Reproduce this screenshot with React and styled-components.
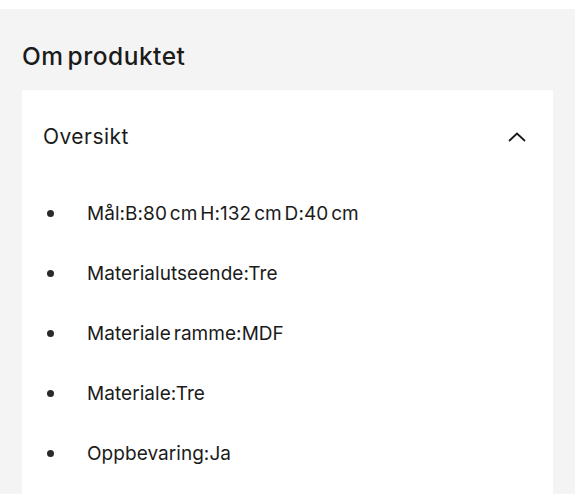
import React from "react";
import styled, { createGlobalStyle } from "styled-components";

const Global = createGlobalStyle`
  html, body { margin: 0; padding: 0; background: #ffffff; }
  body { font-family: Inter, "Noto Sans", sans-serif; color: #1b1b1b; }
`;

const Section = styled.section`
  margin-top: 9px;
  background: #f4f4f4;
  padding: 0 22px;
  height: 485px;
  box-sizing: border-box;
  overflow: hidden;
`;

const Title = styled.h2`
  margin: 0;
  box-sizing: border-box;
  height: 81px;
  padding-top: 13px;
  display: flex;
  align-items: center;
  font-size: 24.5px;
  font-weight: 500;
  letter-spacing: 0.5px;
  word-spacing: -3px;
  color: #1b1b1b;
`;

const Card = styled.div`
  background: #ffffff;
  width: 531px;
  min-height: 420px;
`;

const Header = styled.button`
  all: unset;
  box-sizing: border-box;
  width: 100%;
  height: 93px;
  display: flex;
  align-items: center;
  justify-content: space-between;
  padding: 0 27px 0 21px;
  cursor: pointer;
`;

const HeaderText = styled.span`
  font-family: Inter, "Noto Sans", sans-serif;
  font-size: 21px;
  font-weight: 400;
  letter-spacing: 0.45px;
  color: #1b1b1b;
`;

const List = styled.ul`
  list-style: none;
  margin: 0;
  padding: 0;
`;

const Item = styled.li`
  height: 60px;
  display: flex;
  align-items: center;
  font-size: 19px;
  letter-spacing: 0.05px;
  word-spacing: -2.5px;
  color: #1b1b1b;
  &::before {
    content: "";
    width: 7px;
    height: 7px;
    border-radius: 50%;
    background: #2a2a2a;
    margin-left: 25px;
    margin-right: 33px;
    flex: none;
  }
`;

const items = [
  "Mål:B:80 cm H:132 cm D:40 cm",
  "Materialutseende:Tre",
  "Materiale ramme:MDF",
  "Materiale:Tre",
  "Oppbevaring:Ja",
];

export default function App() {
  return (
    <>
      <Global />
      <Section>
        <Title>Om produktet</Title>
        <Card>
          <Header>
            <HeaderText>Oversikt</HeaderText>
            <svg width="18" height="10" viewBox="0 0 18 10" fill="none">
              <path d="M1 9 L9 1.5 L17 9" stroke="#1b1b1b" strokeWidth="1.8" />
            </svg>
          </Header>
          <List>
            {items.map((t) => (
              <Item key={t}>{t}</Item>
            ))}
          </List>
        </Card>
      </Section>
    </>
  );
}
